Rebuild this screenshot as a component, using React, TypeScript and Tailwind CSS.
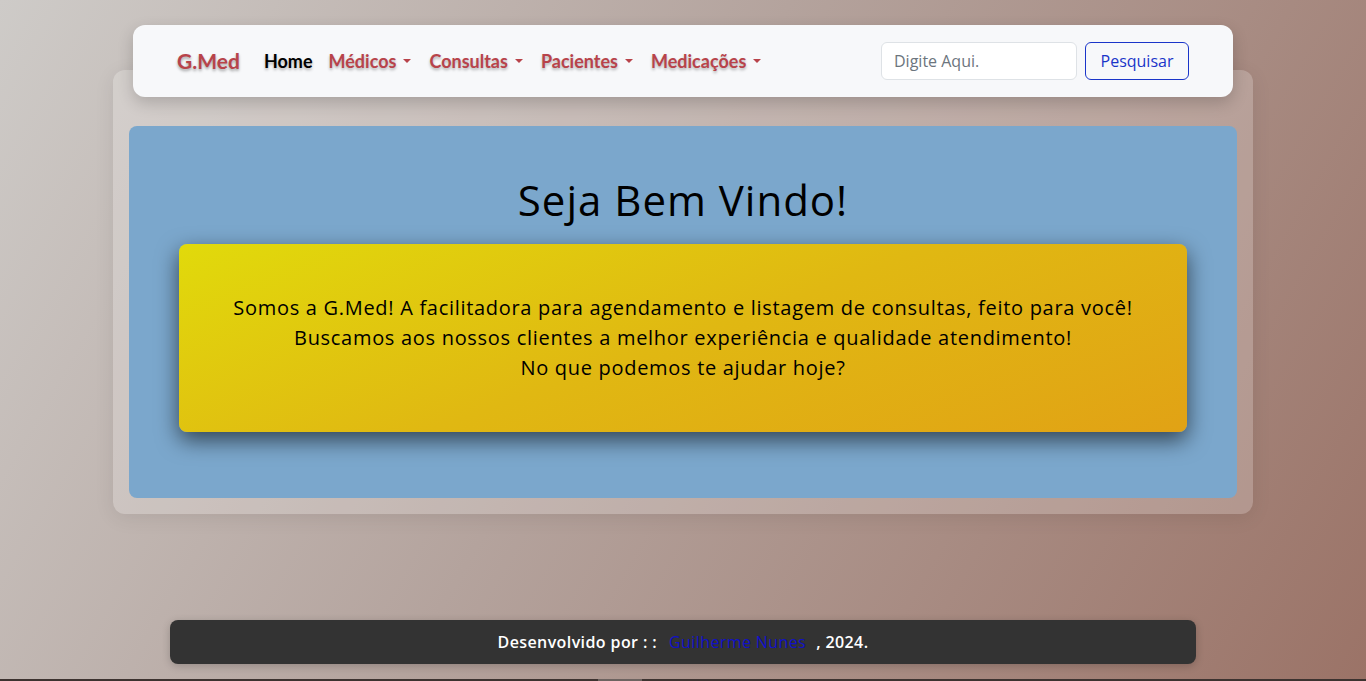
import React from "react";

const navItems = ["Médicos", "Consultas", "Pacientes", "Medicações"];

const Caret = () => (
  <span className="ml-[7px] inline-block h-0 w-0 border-x-[4px] border-t-[4px] border-x-transparent border-t-[#b8434a] align-middle" />
);

const App = () => {
  return (
    <div
      className="flex min-h-screen flex-col items-center bg-[linear-gradient(120deg,#cecbc8_0%,#b4a39d_45%,#9b7367_100%)]"
      style={{ fontFamily: '"Open Sans", "Noto Sans", sans-serif' }}
    >
      {/* navbar */}
      <nav className="relative z-10 mt-[25px] flex h-[72px] w-[1100px] items-center justify-between rounded-xl bg-[#f7f8fa] pl-[44px] pr-[44px] shadow-[0_6px_16px_rgba(0,0,0,0.18)]">
        <div className="flex items-center" style={{ fontFamily: 'Lato, "Noto Sans", sans-serif' }}>
          <span className="mr-[24px] text-[21px] font-bold text-[#b8434a] [text-shadow:0_2px_3px_rgba(0,0,0,0.35)]">
            G.Med
          </span>
          <span className="mr-[16px] text-[18px] font-bold text-black [text-shadow:0_2px_3px_rgba(0,0,0,0.3)]">
            Home
          </span>
          {navItems.map((n) => (
            <span
              key={n}
              className="mr-[18px] flex items-center text-[18px] font-bold text-[#b8434a] [text-shadow:0_2px_3px_rgba(0,0,0,0.3)]"
            >
              {n}
              <Caret />
            </span>
          ))}
        </div>
        <div className="flex items-center gap-[8px]">
          <input
            placeholder="Digite Aqui."
            className="h-[38px] w-[196px] rounded-md border border-[#dee2e6] bg-white px-[12px] text-[16px] text-[#212529] placeholder:text-[#6c757d] outline-none"
          />
          <button className="h-[38px] w-[104px] rounded-md border border-[#1a35c9] text-[16px] text-[#1a35c9]">
            Pesquisar
          </button>
        </div>
      </nav>

      {/* translucent panel */}
      <div className="-mt-[27px] w-[1140px] rounded-xl bg-white/20 px-4 pb-4 pt-[56px] shadow-[0_4px_20px_rgba(0,0,0,0.08)]">
        <div className="flex flex-col items-center rounded-lg bg-[#7ba7cc] px-[50px] pb-[66px] pt-[50px]">
          <h1 className="mb-[20px] text-[42px] leading-[48px] tracking-[1px] text-black">Seja Bem Vindo!</h1>
          <div className="w-full rounded-lg bg-[linear-gradient(160deg,#e1da0b_0%,#e0b812_50%,#e1a215_100%)] py-[49px] text-center text-[20px] font-medium leading-[30px] tracking-[0.7px] text-black shadow-[0_8px_22px_rgba(0,0,0,0.6)]">
            Somos a G.Med! A facilitadora para agendamento e listagem de consultas, feito para você!
            <br />
            Buscamos aos nossos clientes a melhor experiência e qualidade atendimento!
            <br />
            No que podemos te ajudar hoje?
          </div>
        </div>
      </div>

      {/* footer */}
      <footer className="mb-[15px] mt-auto flex h-[44px] w-[1026px] items-center justify-center rounded-lg bg-[#333333] text-[16px] font-semibold tracking-[0.4px] text-white shadow-[0_2px_8px_rgba(0,0,0,0.2)]">
        <span>Desenvolvido por : :</span>
        <span className="ml-[12px] mr-[10px] font-normal text-[#1010c8]">Guilherme Nunes</span>
        <span>, 2024.</span>
      </footer>
      <div className="flex h-[2px] w-full bg-[#3d3330]">
        <div className="ml-[598px] h-full w-[44px] bg-[#6d6360]" />
      </div>
    </div>
  );
};

export default App;
